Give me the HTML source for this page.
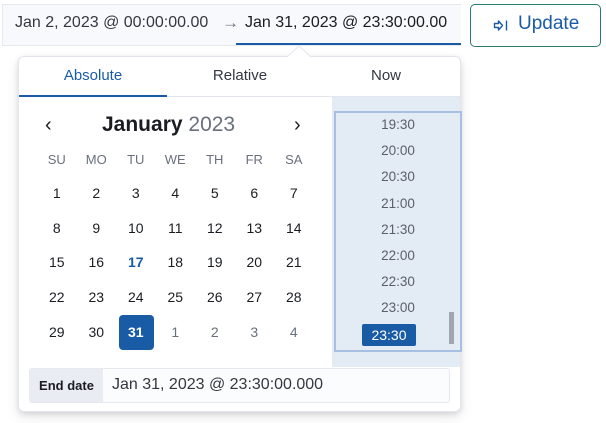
<!DOCTYPE html>
<html><head><meta charset="utf-8"><style>
*{box-sizing:border-box;margin:0;padding:0}
body{width:606px;height:423px;background:#fff;font-family:"Liberation Sans",sans-serif;position:relative;overflow:hidden;color:#1a1c21}
.a{position:absolute}
.bar{left:2px;top:4px;width:459px;height:42px;background:#f8f9fc;border:1px solid #e6e9f0;border-right:none}
.btn{left:470px;top:4px;width:131px;height:43px;border:1px solid #2b7a6f;border-radius:5px;background:#fff}
.pop{left:18px;top:56px;width:443px;height:356px;background:#fff;border:1px solid #e3e6ec;border-radius:6px;box-shadow:0 2px 6px rgba(0,0,0,.12),0 6px 14px rgba(0,0,0,.08)}
.tab{top:67px;width:148px;text-align:center;font-size:15px;color:#343741}
.g{left:37px;width:277px;display:grid;grid-template-columns:repeat(7,39.5px);text-align:center}
.g span{height:34.7px;line-height:34.7px;font-size:14px}
.m{color:#69707d}
.t{left:334px;width:128px;text-align:center;font-size:13.5px;color:#5a606b}
</style></head><body>
<div class="a bar"></div>
<div class="a" style="left:15px;top:14px;font-size:16px;color:#343741">Jan 2, 2023 @ 00:00:00.00</div>
<div class="a" style="left:222px;top:13px;font-size:17px;color:#69707d">→</div>
<div class="a" style="left:245px;top:14px;font-size:16px;color:#1a1c21">Jan 31, 2023 @ 23:30:00.00</div>
<div class="a" style="left:236px;top:43px;width:225px;height:2px;background:#1a5ba6"></div>
<div class="a btn"></div>
<svg class="a" style="left:492px;top:19px" width="18" height="13" viewBox="0 0 18 13"><path d="M2.5 4.5h4v-2.5l4 4.5-4 4.5v-2.5h-4z" fill="none" stroke="#1a5ba6" stroke-width="1.4" stroke-linejoin="round"/><path d="M14.5 1.5v10" stroke="#1a5ba6" stroke-width="1.4"/></svg>
<div class="a" style="left:518px;top:13px;font-size:19px;color:#1a5ba6">Update</div>
<div class="a pop"></div>
<svg class="a" style="left:287px;top:46px" width="24" height="12"><path d="M0 11L12 0L24 11" fill="#fff" stroke="#e3e6ec"/></svg>
<div class="a tab" style="left:19px;color:#1a5ba6">Absolute</div>
<div class="a tab" style="left:166px">Relative</div>
<div class="a tab" style="left:312px">Now</div>
<div class="a" style="left:19px;top:96px;width:441px;height:1px;background:#e3e6ec"></div>
<div class="a" style="left:19px;top:95px;width:148px;height:2px;background:#1a5ba6"></div>
<div class="a" style="left:332px;top:97px;width:128px;height:270px;background:#e3ebf5"></div>
<div class="a" style="left:334px;top:111px;width:128px;height:241px;border:2px solid #a7bfe0"></div>
<div class="a" style="left:449px;top:312px;width:5px;height:32px;background:#a0a6ae"></div>
<div class="a t" style="top:117px">19:30</div>
<div class="a t" style="top:143px">20:00</div>
<div class="a t" style="top:169px">20:30</div>
<div class="a t" style="top:196px">21:00</div>
<div class="a t" style="top:222px">21:30</div>
<div class="a t" style="top:248px">22:00</div>
<div class="a t" style="top:274px">22:30</div>
<div class="a t" style="top:300px">23:00</div>
<div class="a" style="left:362px;top:324px;width:54px;height:22px;background:#1a5ba6;border-radius:2px;color:#fff;font-size:14px;text-align:center;line-height:22px">23:30</div>
<div class="a" style="left:45px;top:114px;font-size:20px;color:#1a1c21">‹</div>
<div class="a" style="left:294px;top:114px;font-size:20px;color:#1a1c21">›</div>
<div class="a" style="left:102px;top:113px;font-size:21px;font-weight:bold;color:#1a1c21">January <span style="font-weight:normal;color:#69707d">2023</span></div>
<div class="a g" style="top:151px;color:#69707d"><span style="font-size:13px;height:18px;line-height:18px">SU</span><span style="font-size:13px;height:18px;line-height:18px">MO</span><span style="font-size:13px;height:18px;line-height:18px">TU</span><span style="font-size:13px;height:18px;line-height:18px">WE</span><span style="font-size:13px;height:18px;line-height:18px">TH</span><span style="font-size:13px;height:18px;line-height:18px">FR</span><span style="font-size:13px;height:18px;line-height:18px">SA</span></div>
<div class="a" style="left:119px;top:315px;width:35px;height:35px;background:#1a5ba6;border-radius:4px"></div>
<div class="a g" style="top:176px">
<span>1</span><span>2</span><span>3</span><span>4</span><span>5</span><span>6</span><span>7</span>
<span>8</span><span>9</span><span>10</span><span>11</span><span>12</span><span>13</span><span>14</span>
<span>15</span><span>16</span><span style="color:#1a5ba6;font-weight:bold">17</span><span>18</span><span>19</span><span>20</span><span>21</span>
<span>22</span><span>23</span><span>24</span><span>25</span><span>26</span><span>27</span><span>28</span>
<span>29</span><span>30</span><span style="color:#fff;font-weight:bold">31</span><span class="m">1</span><span class="m">2</span><span class="m">3</span><span class="m">4</span>
</div>
<div class="a" style="left:29px;top:368px;width:421px;height:35px;border:1px solid #e6e9f0;border-radius:3px;background:#fbfcfd"></div>
<div class="a" style="left:30px;top:369px;width:73px;height:33px;background:#e9edf3;font-size:13px;font-weight:bold;line-height:33px;text-align:center;color:#1a1c21">End date</div>
<div class="a" style="left:112px;top:376px;font-size:16px;color:#343741">Jan 31, 2023 @ 23:30:00.000</div>
</body></html>
